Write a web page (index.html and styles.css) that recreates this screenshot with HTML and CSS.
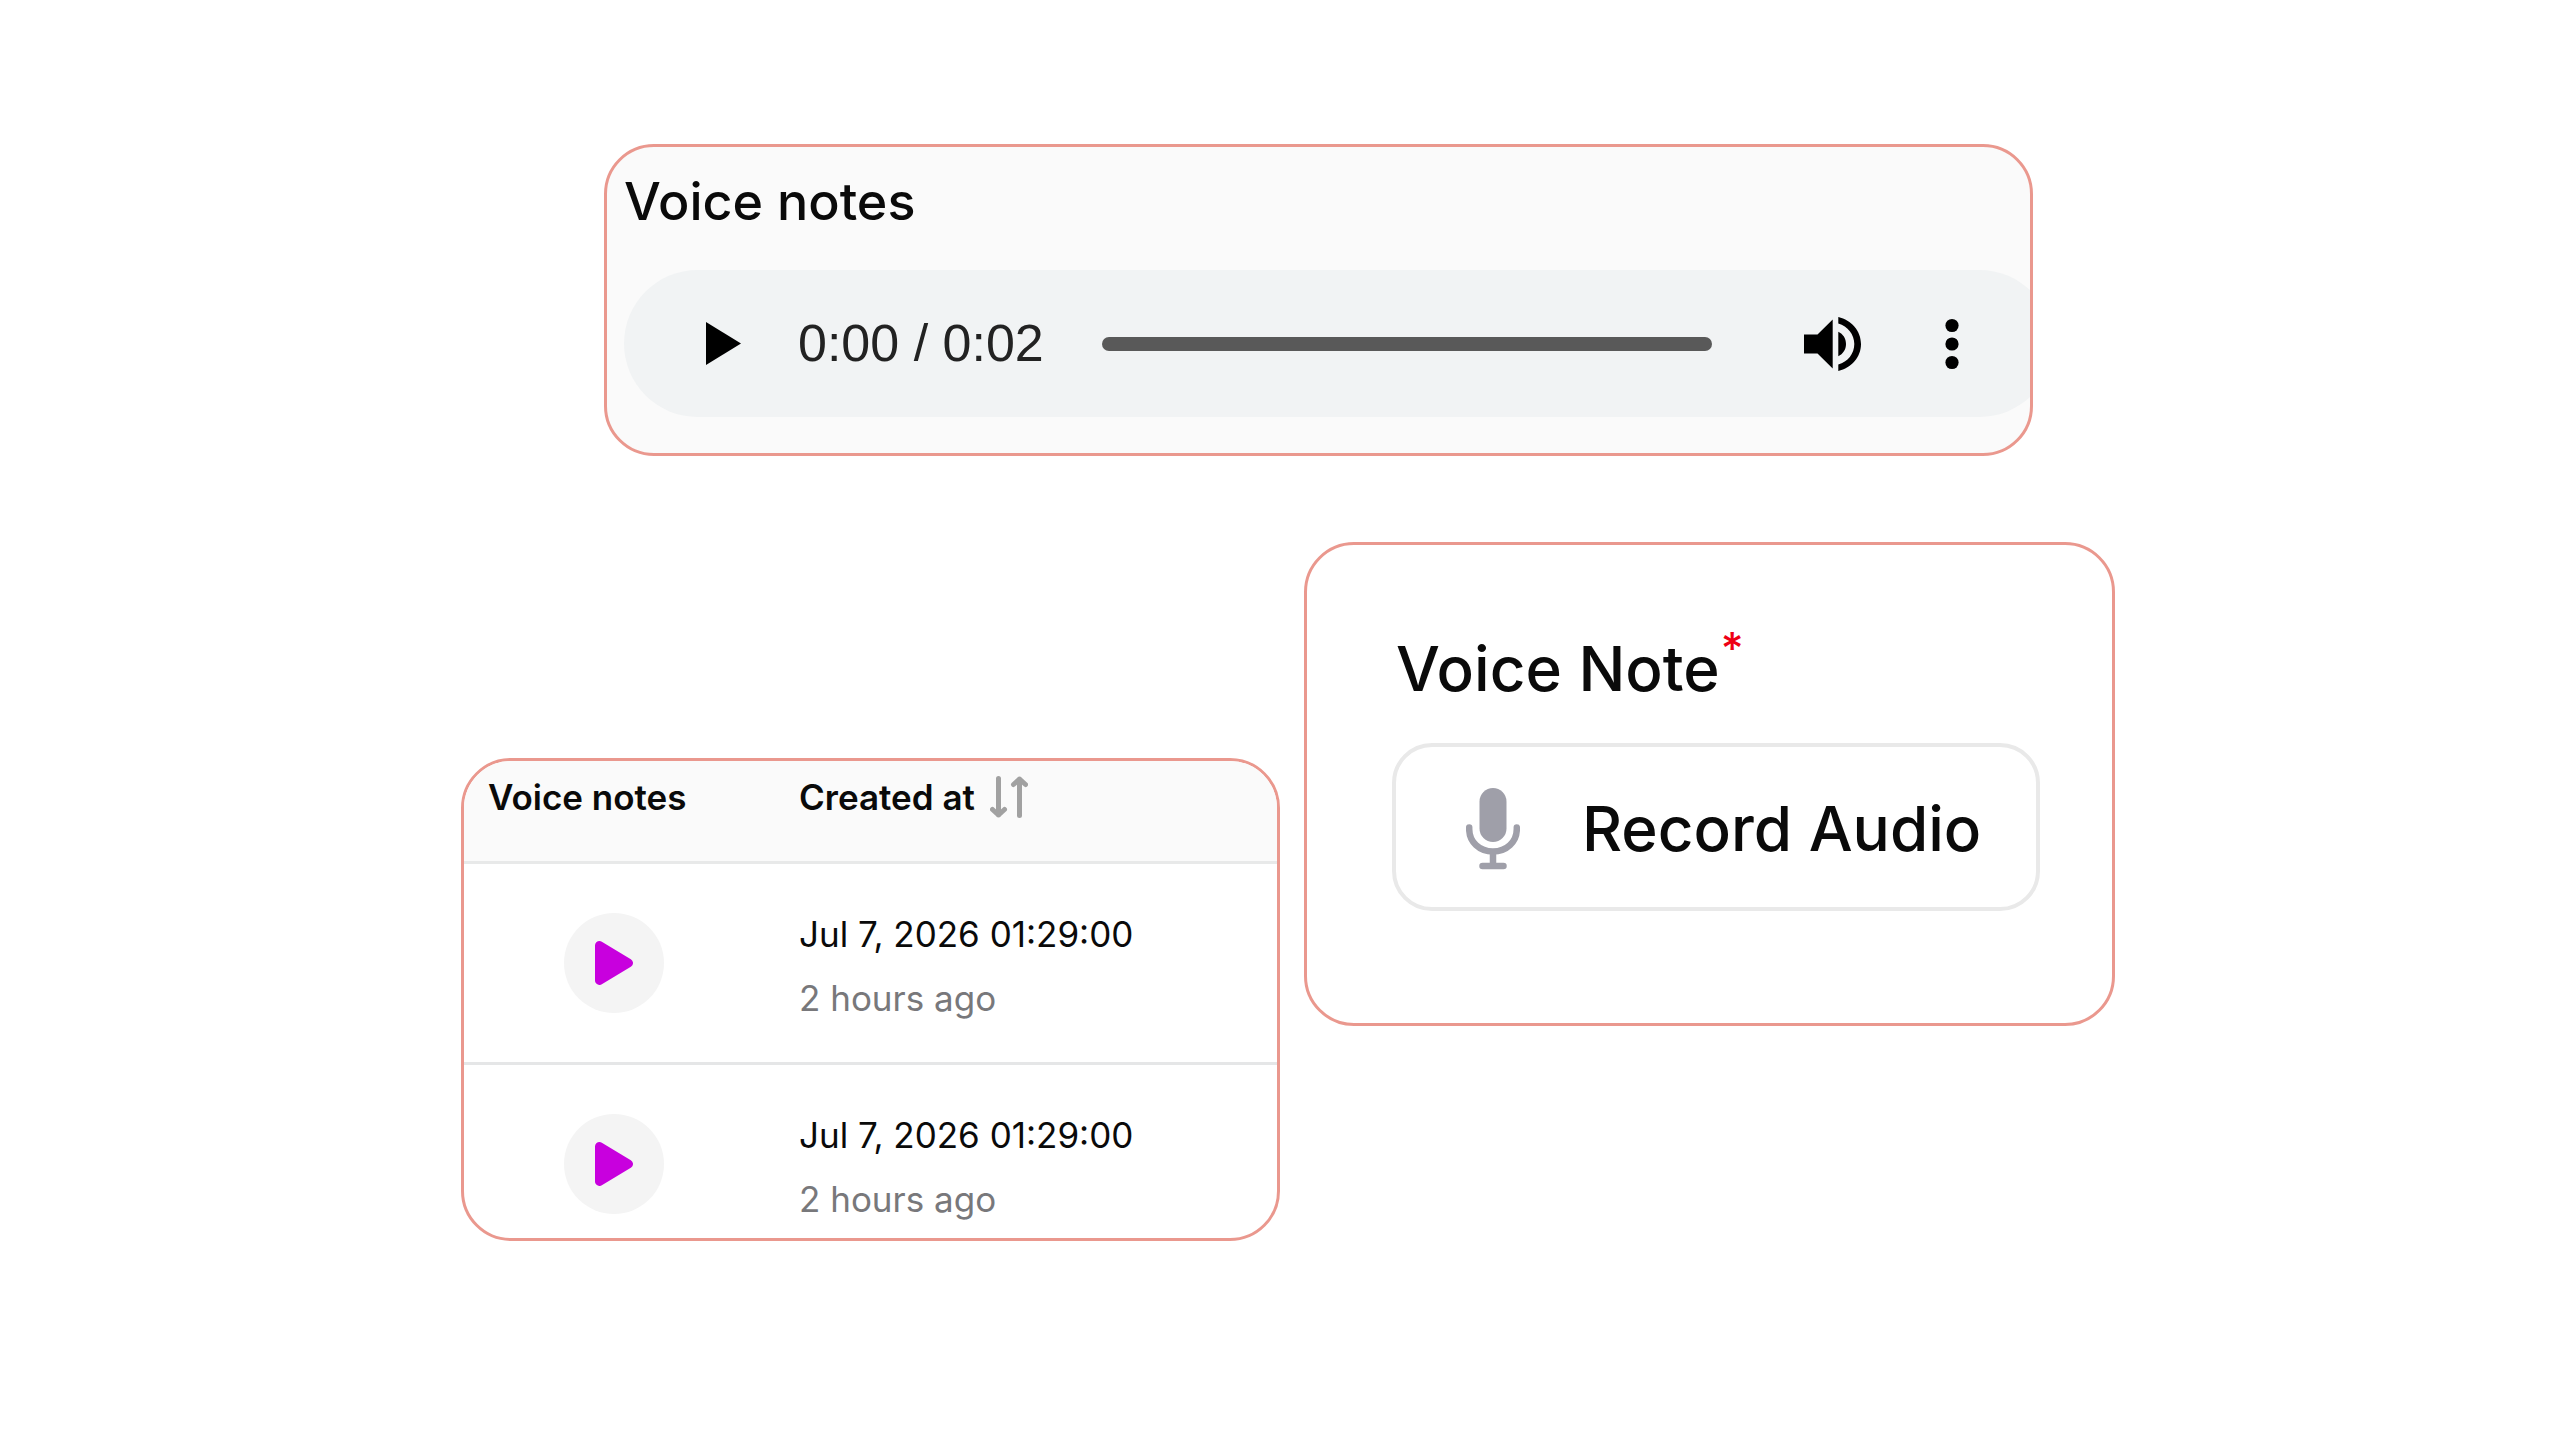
FILE: index.html
```html
<!DOCTYPE html>
<html lang="en">
<head>
  <meta charset="utf-8">
  <meta name="viewport" content="width=device-width, initial-scale=1">
  <title>Voice notes</title>
  <link rel="stylesheet" href="styles.css">
</head>
<body>
  <main class="board">
    <section class="card player-card">
      <h2 class="player-title">Voice notes</h2>
      <div class="player">
        <button class="icon-button" type="button" aria-label="Play">
          <svg width="35" height="43" viewBox="0 0 35 43"><path d="M0 0L35 21.500L0 43Z"/></svg>
        </button>
        <span class="player-time">0:00 / 0:02</span>
        <input class="player-track" type="range" min="0" max="2" value="0" aria-label="Seek">
        <button class="icon-button" type="button" aria-label="Volume">
          <svg width="57" height="54" viewBox="0 0 57 54"><path d="M0 17.500H13.500L28.700 2.500V51.500L13.500 36.500H0ZM34.300 14.800C39 17 42 21.500 42 27S39 37 34.300 39.200ZM34.300 0C47.500 3 57 13.800 57 27S47.500 51 34.300 54V47.600C43.800 44.800 50.300 36.700 50.300 27S43.800 9.200 34.300 6.400Z"/></svg>
        </button>
        <button class="icon-button menu-button" type="button" aria-label="More options">
          <svg width="14" height="52" viewBox="0 0 14 52"><circle cx="7" cy="7.500" r="6.600"/><circle cx="7" cy="26" r="6.600"/><circle cx="7" cy="44.500" r="6.600"/></svg>
        </button>
      </div>
    </section>

    <section class="card table-card">
      <table class="notes">
        <thead>
          <tr>
            <th class="note-column" scope="col">Voice notes</th>
            <th scope="col">
              <div class="sortable">
                Created at
                <button class="icon-button" type="button" aria-label="Sort by created at">
                  <svg class="sort-icon" width="38" height="42" viewBox="0 0 38 42"><path d="M8.500 2.500V39M2.500 33.500L8.500 39L14.500 33.500M29.500 39.500V3M23.500 8.500L29.500 3L35.500 8.500"/></svg>
                </button>
              </div>
            </th>
          </tr>
        </thead>
        <tbody>
          <tr>
            <td class="note-cell">
              <button class="play-button" type="button" aria-label="Play voice note">
                <svg width="38" height="44" viewBox="0 0 38 44"><path d="M4.500 4.500L33.500 22L4.500 39.500Z"/></svg>
              </button>
            </td>
            <td>
              <div class="created"><span>Jul 7, 2026 01:29:00</span><span class="ago">2 hours ago</span></div>
            </td>
          </tr>
          <tr>
            <td class="note-cell">
              <button class="play-button" type="button" aria-label="Play voice note">
                <svg width="38" height="44" viewBox="0 0 38 44"><path d="M4.500 4.500L33.500 22L4.500 39.500Z"/></svg>
              </button>
            </td>
            <td>
              <div class="created"><span>Jul 7, 2026 01:29:00</span><span class="ago">2 hours ago</span></div>
            </td>
          </tr>
        </tbody>
      </table>
    </section>

    <section class="card record-card">
      <label class="record-label" for="record">Voice Note<span class="required">*</span></label>
      <button class="record-button" id="record" type="button">
        <svg class="mic" width="54" height="82" viewBox="0 0 54 82"><rect x="13.500" y="0" width="27" height="54" rx="13.500"/><path d="M3.200 39.500V41C3.200 54 13.500 63.500 27 63.500S50.800 54 50.800 41V39.500M27 64V77M16.500 78H37.500"/></svg>
        Record Audio
      </button>
    </section>
  </main>
</body>
</html>
```
FILE: styles.css
```css
* {
  box-sizing: border-box;
}

body {
  margin: 0;
  background: #fff;
  color: #0a0a0a;
  font-family: Inter, "Liberation Sans", sans-serif;
  font-optical-sizing: none;
}

button {
  font: inherit;
  color: inherit;
  cursor: pointer;
}

svg {
  display: block;
}

.board {
  display: grid;
  grid-template-columns: 819fr 811fr;
  gap: 86px 24px;
  align-items: start;
  max-width: 1670px;
  margin: 0 auto;
  padding: 144px 0 144px 16px;
}

.card {
  overflow: hidden;
  border: 3px solid #ea988e;
  border-radius: 50px;
  background: #fff;
}

.icon-button {
  flex: none;
  padding: 0;
  border: 0;
  background: none;
}

/* Audio player */
.player-card {
  grid-column: 1 / -1;
  margin: 0 82px 0 143px;
  padding: 23px 0 36px 17px;
  background: #fafafa;
}

.player-title {
  margin: 0 0 36px;
  font-size: 52px;
  font-weight: 500;
  line-height: 64px;
}

.player {
  display: flex;
  align-items: center;
  height: 147px;
  margin-right: -23px;
  padding: 0 94px 0 82px;
  border-radius: 74px;
  background: #f1f3f4;
}

.player-time {
  flex: none;
  margin: 0 58px 0 57px;
  padding-bottom: 2px;
  color: #222;
  font-family: "Liberation Sans", Arial, sans-serif;
  font-size: 52px;
  line-height: 60px;
}

.player-track {
  flex: 1;
  min-width: 0;
  height: 14px;
  margin: 0 92px 0 0;
  border-radius: 7px;
  background: #595959;
  appearance: none;
}

.player-track::-webkit-slider-thumb {
  width: 1px;
  height: 14px;
  appearance: none;
}

.menu-button {
  margin-left: 84px;
}

/* Notes table */
.table-card {
  margin-top: 216px;
}

.notes {
  width: 100%;
  border-collapse: separate;
  border-spacing: 0;
  table-layout: fixed;
  font-size: 35px;
  line-height: 44px;
}

.notes th {
  padding: 14px 24px 42px;
  border-bottom: 3px solid #e8e9e9;
  background: #fafafa;
  font-weight: 600;
  text-align: left;
  vertical-align: top;
}

.notes .note-column {
  width: 311px;
}

.notes td {
  padding: 48px 24px 42px;
  border-bottom: 3px solid #e5e6e7;
  vertical-align: top;
}

.notes .note-cell {
  padding: 49px 0 0 100px;
}

.notes tr:last-child td {
  padding-bottom: 17px;
  border-bottom: 0;
}

.sortable {
  display: flex;
  align-items: center;
  gap: 15px;
}

.sort-icon {
  fill: none;
  stroke: #a1a1a1;
  stroke-width: 5;
  stroke-linecap: round;
  stroke-linejoin: round;
}

.play-button {
  display: grid;
  place-items: center;
  width: 100px;
  height: 100px;
  padding: 0;
  border: 0;
  border-radius: 50%;
  background: #f4f4f4;
}

.play-button path {
  fill: #c800de;
  stroke: #c800de;
  stroke-width: 9;
  stroke-linejoin: round;
}

.created {
  display: flex;
  flex-direction: column;
  gap: 20px;
}

.ago {
  color: #78787b;
}

/* Record form */
.record-card {
  padding: 86px 72px 112px 85px;
  font-size: 62px;
  font-weight: 500;
  line-height: 76px;
}

.record-label {
  display: flex;
  align-items: flex-start;
  gap: 1px;
  margin: 0 0 36px;
  padding-left: 4px;
}

.required {
  color: #ee0014;
  font-size: 44px;
  line-height: 34px;
}

.record-button {
  display: flex;
  align-items: center;
  gap: 62px;
  width: 100%;
  height: 168px;
  padding: 3px 0 0 70px;
  border: 4px solid #e9e9e9;
  border-radius: 40px;
  background: #fff;
  white-space: nowrap;
}

.mic {
  flex: none;
  fill: #9f9fa9;
}

.mic path {
  fill: none;
  stroke: #9f9fa9;
  stroke-width: 6.500;
  stroke-linecap: round;
}
```
